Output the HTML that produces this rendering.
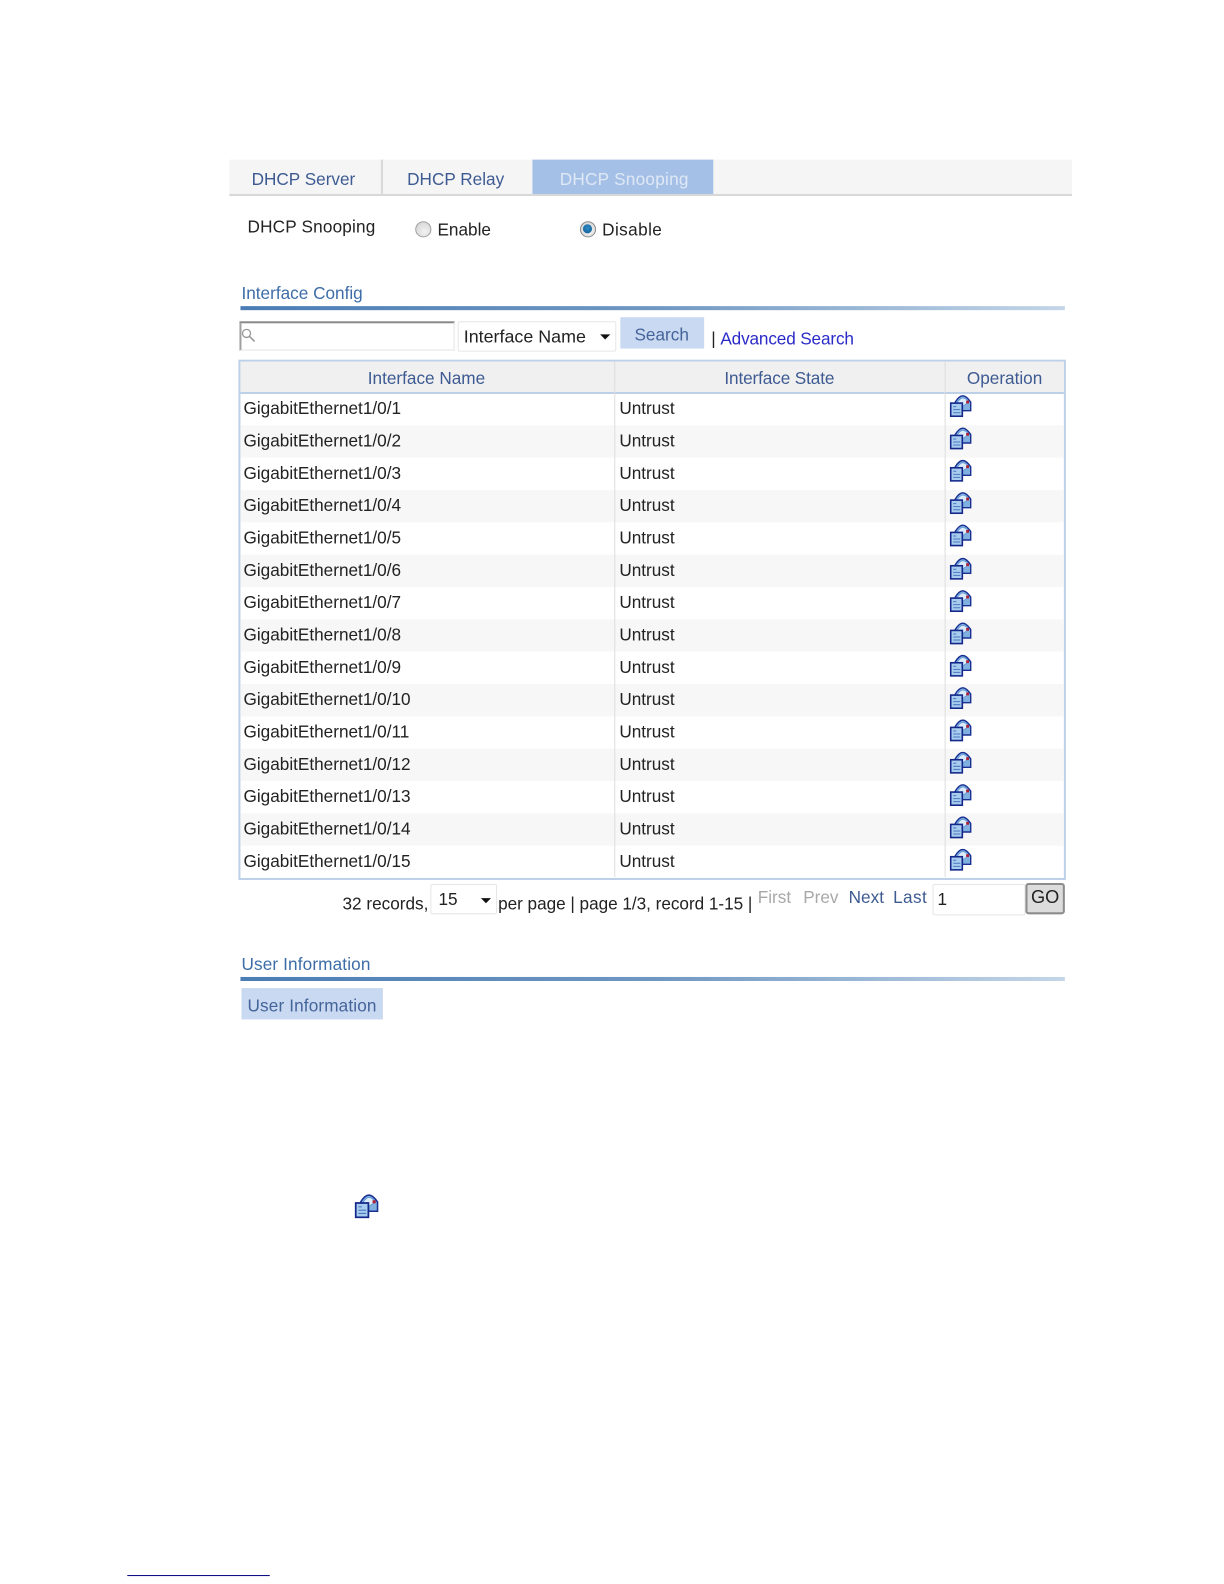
<!DOCTYPE html>
<html><head><meta charset="utf-8">
<style>
html,body{margin:0;padding:0;background:#fff}
#p{position:relative;width:1224px;height:1584px;overflow:hidden;background:#fff;font-family:"Liberation Sans",sans-serif;font-size:17px;color:#222}
#p div,#p svg{position:absolute}
#w{left:0;top:0;width:1224px;height:1584px;transform-origin:0 0;transform:scale(1.0103);filter:blur(.3px)}
.t{white-space:nowrap;line-height:20px;height:20px}
.b{color:#3d5a92}
.l{left:241px}
.u{left:613px}
svg.i{width:22px;height:22px;left:940px}
.r{left:238px;width:815px;height:32px}
.g{background:#f7f7f7}
.grad{left:238px;width:816px;height:4px;background:linear-gradient(90deg,#4a7db5 0%,#6f97c2 50%,#c4d6e8 100%)}
.arr{width:0;height:0;border-left:5px solid transparent;border-right:5px solid transparent;border-top:5px solid #111}
.rd{width:14px;height:14px;border:1px solid #a0a0a0;border-radius:50%;background:radial-gradient(circle at 60% 65%,#f2f2f2,#cfcfcf)}
</style></head>
<body><div id="p"><div id="w">
<svg width="0" height="0" style="left:0;top:0"><defs><g id="ic">
<path d="M5.5 7 C8 3 10.5 .8 13 .8 C15.5 .8 18 3 20.8 7 V15.5 H5.5Z" fill="#7fb0e0" stroke="#1a3092" stroke-width="1.4"/>
<path d="M7.5 7.5 C9.5 4.5 11.5 3 13 3 C15 3 17 4.5 19 7 L13 11Z" fill="#dcebf9" stroke="#5c8fd0" stroke-width=".7"/>
<rect x="16.3" y="5.5" width="2.8" height="2.8" fill="#b02035"/>
<rect x="1" y="8" width="11.5" height="13" fill="#a8ccee" stroke="#14288c" stroke-width="1.6"/>
<path d="M3.5 11.5h3M3.5 14.5h7M3.5 17.5h7" stroke="#4a78c0" stroke-width="1"/>
</g></defs></svg>

<!-- tabs -->
<div style="left:227px;top:158px;width:834px;height:34px;background:#f5f5f5"></div>
<div style="left:227px;top:192px;width:834px;height:1.5px;background:#d8d8d8"></div>
<div style="left:377px;top:158px;width:1.5px;height:34px;background:#d8d8d8"></div>
<div style="left:527px;top:158px;width:179px;height:34px;background:#a5c0e6"></div>
<div class="t b" style="left:249px;top:168px">DHCP Server</div>
<div class="t b" style="left:403px;top:168px">DHCP Relay</div>
<div class="t" style="left:554px;top:168px;color:#dfe8f5;letter-spacing:.25px">DHCP Snooping</div>

<!-- radios -->
<div class="t" style="left:245px;top:215px;letter-spacing:.17px">DHCP Snooping</div>
<div class="rd" style="left:411px;top:219px"></div>
<div class="t" style="left:433px;top:218px">Enable</div>
<div class="rd" style="left:574px;top:219px;border-color:#8a8a8a"></div>
<div style="left:577px;top:222px;width:9px;height:9px;border-radius:50%;background:radial-gradient(circle at 50% 40%,#2f8ac4,#0c5a90)"></div>
<div class="t" style="left:596px;top:218px;letter-spacing:.4px">Disable</div>

<!-- Interface Config -->
<div class="t" style="left:239px;top:281px;color:#3d6da8">Interface Config</div>
<div class="grad" style="top:303px"></div>

<!-- search -->
<div style="left:237px;top:318px;width:210px;height:26px;background:#fff;border:1px solid #e4e4e4;border-top:2px solid #8a8a8a;border-left:2px solid #a0a0a0"></div>
<svg style="left:238px;top:324px" width="15" height="16"><circle cx="6" cy="6" r="4" fill="none" stroke="#999" stroke-width="1.3"/><path d="M9 9l5 5" stroke="#999" stroke-width="1.6"/></svg>
<div style="left:453px;top:318px;width:155px;height:28px;border:1px solid #e6e6e6;border-radius:2px;background:#fff"></div>
<div class="t" style="left:459px;top:323px;font-size:17.7px">Interface Name</div>
<div class="arr" style="left:594px;top:331px"></div>
<div style="left:614px;top:314px;width:83px;height:31px;background:#c9d9f1"></div>
<div class="t" style="left:628px;top:322px;color:#44649a">Search</div>
<div class="t" style="left:704px;top:326px;color:#222">|</div>
<div class="t" style="left:713px;top:326px;color:#2a2ac8;letter-spacing:-.14px">Advanced Search</div>

<!-- table -->
<div style="left:236px;top:356px;width:815px;height:511px;border:2px solid #bcd0e8"></div>
<div style="left:238px;top:358px;width:815px;height:30px;background:#f0f0f0"></div>
<div style="left:238px;top:388px;width:815px;height:1.5px;background:#bcd0e8"></div>
<div class="r g" style="top:421px"></div>
<div class="r g" style="top:485px"></div>
<div class="r g" style="top:549px"></div>
<div class="r g" style="top:613px"></div>
<div class="r g" style="top:677px"></div>
<div class="r g" style="top:741px"></div>
<div class="r g" style="top:805px"></div>
<div style="left:607.5px;top:358px;width:1.5px;height:510px;background:#dedede"></div>
<div style="left:934.5px;top:358px;width:1.5px;height:510px;background:#dedede"></div>
<div class="t b" style="left:364px;top:365px">Interface Name</div>
<div class="t b" style="left:717px;top:365px;letter-spacing:-.12px">Interface State</div>
<div class="t b" style="left:957px;top:365px">Operation</div>

<div class="t l" style="top:395px">GigabitEthernet1/0/1</div><div class="t u" style="top:395px">Untrust</div><svg class="i" style="top:391px" viewBox="0 0 22 22"><use href="#ic"/></svg>
<div class="t l" style="top:427px">GigabitEthernet1/0/2</div><div class="t u" style="top:427px">Untrust</div><svg class="i" style="top:423px" viewBox="0 0 22 22"><use href="#ic"/></svg>
<div class="t l" style="top:459px">GigabitEthernet1/0/3</div><div class="t u" style="top:459px">Untrust</div><svg class="i" style="top:455px" viewBox="0 0 22 22"><use href="#ic"/></svg>
<div class="t l" style="top:491px">GigabitEthernet1/0/4</div><div class="t u" style="top:491px">Untrust</div><svg class="i" style="top:487px" viewBox="0 0 22 22"><use href="#ic"/></svg>
<div class="t l" style="top:523px">GigabitEthernet1/0/5</div><div class="t u" style="top:523px">Untrust</div><svg class="i" style="top:519px" viewBox="0 0 22 22"><use href="#ic"/></svg>
<div class="t l" style="top:555px">GigabitEthernet1/0/6</div><div class="t u" style="top:555px">Untrust</div><svg class="i" style="top:552px" viewBox="0 0 22 22"><use href="#ic"/></svg>
<div class="t l" style="top:587px">GigabitEthernet1/0/7</div><div class="t u" style="top:587px">Untrust</div><svg class="i" style="top:584px" viewBox="0 0 22 22"><use href="#ic"/></svg>
<div class="t l" style="top:619px">GigabitEthernet1/0/8</div><div class="t u" style="top:619px">Untrust</div><svg class="i" style="top:616px" viewBox="0 0 22 22"><use href="#ic"/></svg>
<div class="t l" style="top:651px">GigabitEthernet1/0/9</div><div class="t u" style="top:651px">Untrust</div><svg class="i" style="top:648px" viewBox="0 0 22 22"><use href="#ic"/></svg>
<div class="t l" style="top:683px">GigabitEthernet1/0/10</div><div class="t u" style="top:683px">Untrust</div><svg class="i" style="top:680px" viewBox="0 0 22 22"><use href="#ic"/></svg>
<div class="t l" style="top:715px">GigabitEthernet1/0/11</div><div class="t u" style="top:715px">Untrust</div><svg class="i" style="top:712px" viewBox="0 0 22 22"><use href="#ic"/></svg>
<div class="t l" style="top:747px">GigabitEthernet1/0/12</div><div class="t u" style="top:747px">Untrust</div><svg class="i" style="top:744px" viewBox="0 0 22 22"><use href="#ic"/></svg>
<div class="t l" style="top:779px">GigabitEthernet1/0/13</div><div class="t u" style="top:779px">Untrust</div><svg class="i" style="top:776px" viewBox="0 0 22 22"><use href="#ic"/></svg>
<div class="t l" style="top:811px">GigabitEthernet1/0/14</div><div class="t u" style="top:811px">Untrust</div><svg class="i" style="top:808px" viewBox="0 0 22 22"><use href="#ic"/></svg>
<div class="t l" style="top:843px">GigabitEthernet1/0/15</div><div class="t u" style="top:843px">Untrust</div><svg class="i" style="top:840px" viewBox="0 0 22 22"><use href="#ic"/></svg>

<!-- pager -->
<div class="t" style="left:339px;top:885px">32 records,</div>
<div style="left:426px;top:875px;width:64px;height:28px;border:1px solid #e6e6e6;border-radius:2px;background:#fff"></div>
<div class="t" style="left:434px;top:881px">15</div>
<div class="arr" style="left:476px;top:889px"></div>
<div class="t" style="left:493px;top:885px;letter-spacing:-.03px">per page | page 1/3, record 1-15 |</div>
<div class="t" style="left:750px;top:879px;color:#a8a8a8">First</div>
<div class="t" style="left:795px;top:879px;color:#a8a8a8">Prev</div>
<div class="t b" style="left:840px;top:879px">Next</div>
<div class="t b" style="left:884px;top:879px;letter-spacing:.4px">Last</div>
<div style="left:923px;top:875px;width:90px;height:29px;border:1px solid #e6e6e6;border-radius:2px;background:#fff"></div>
<div class="t" style="left:928px;top:881px">1</div>
<div style="left:1015px;top:873.5px;width:35px;height:27.5px;border:2px solid #8c8c8c;border-radius:3px;background:#dcdcdc"></div>
<div class="t" style="left:1020.5px;top:878px;font-size:18px;color:#222">GO</div>

<!-- User Information -->
<div class="t" style="left:239px;top:945px;color:#3d6da8;letter-spacing:.13px">User Information</div>
<div class="grad" style="top:967px"></div>
<div style="left:239px;top:978px;width:139.5px;height:31px;background:#c9d9f1"></div>
<div class="t" style="left:245px;top:986px;color:#44649a;letter-spacing:.13px">User Information</div>

<svg style="left:351px;top:1182px" width="24" height="24" viewBox="0 0 22 22"><use href="#ic"/></svg>

<div style="left:126px;top:1559px;width:141px;height:1.3px;background:#000080"></div>
</div></div></body></html>
